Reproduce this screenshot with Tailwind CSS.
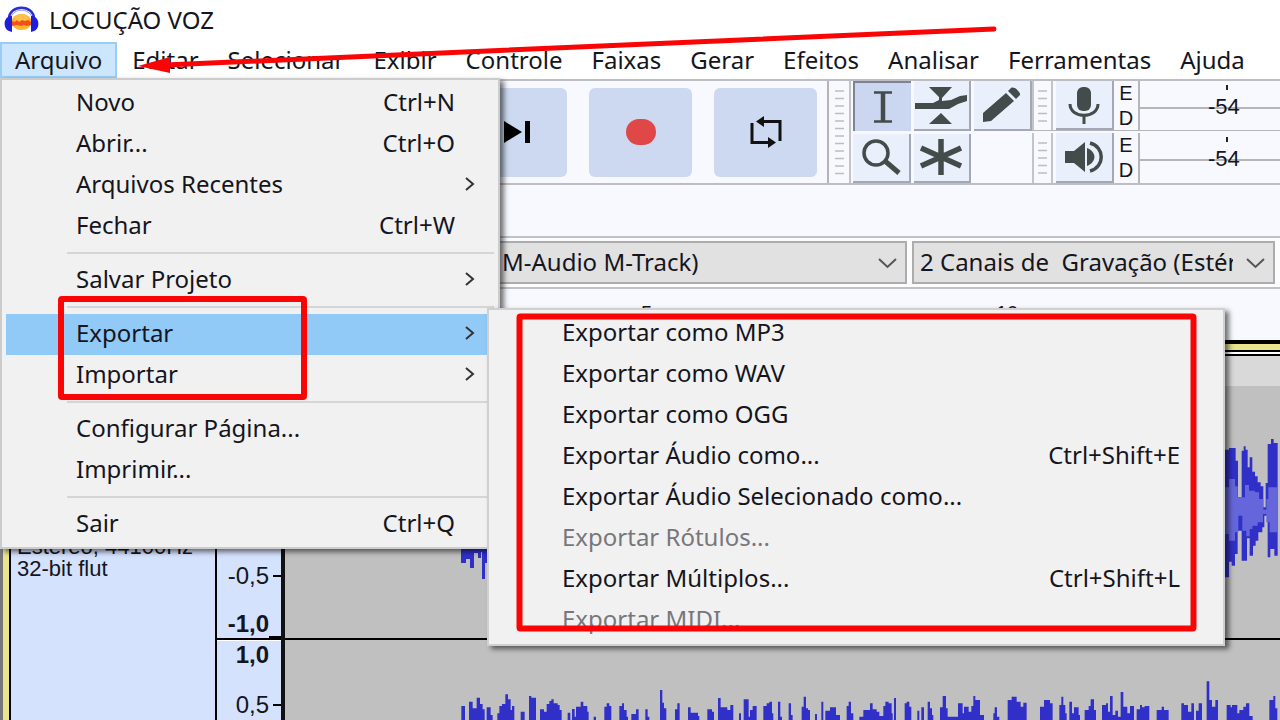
<!DOCTYPE html>
<html lang="pt-BR">
<head>
<meta charset="utf-8">
<title>LOCUÇÃO VOZ</title>
<script src="https://cdn.jsdelivr.net/npm/@tailwindcss/browser@4"></script>
</head>
<body class="relative flex h-screen flex-col overflow-hidden bg-white font-['Noto_Sans','Open_Sans',sans-serif] text-[24px] leading-[30px] text-[#151520]">

<header class="flex h-[42px] shrink-0 items-center gap-[10px] pl-1">
  <svg class="h-8 w-[35px]" viewBox="0 0 35 32" aria-hidden="true">
    <ellipse cx="17.500" cy="17" rx="10" ry="8" fill="#ffb52e"/>
    <ellipse cx="17.500" cy="13" rx="7" ry="4" fill="#ffc04a"/>
    <path d="M8 16l3 1 2-2 2 2 3-2 3 1 3-1 3 2v3l-4 1-3-1-3 1-4-1-5 1z" fill="#f4501c"/>
    <path d="M5 14C5 -1 30 -1 30 14" fill="none" stroke="#2a2fd0" stroke-width="2.500"/>
    <path d="M7 12C10 3 25 3 28 12" fill="none" stroke="#8d93ef" stroke-width="1"/>
    <path d="M6 11C-1 13-1 24 5 26l3 1V11zM29 11c7 2 7 13 1 15l-3 1V11z" fill="#1d1fdd"/>
  </svg>
  <h1 class="pb-[2px]">LOCUÇÃO VOZ</h1>
</header>

<nav class="flex h-9 shrink-0 items-center gap-px" aria-label="Menu principal">
  <button class="h-full border-2 border-[#99cdf5] bg-[#cce6fd] px-[13px]">Arquivo</button>
  <button class="px-[14px]">Editar</button>
  <button class="px-[14px]">Selecionar</button>
  <button class="px-[14px]">Exibir</button>
  <button class="px-[14px]">Controle</button>
  <button class="px-[14px]">Faixas</button>
  <button class="px-[14px]">Gerar</button>
  <button class="px-[14px]">Efeitos</button>
  <button class="px-[14px]">Analisar</button>
  <button class="px-[14px]">Ferramentas</button>
  <button class="px-[14px]">Ajuda</button>
</nav>

<section class="mt-px flex h-[106px] shrink-0 border-y-2 border-[#bcbec3] bg-[#f8f9ff]" aria-label="Ferramentas">
  <div class="flex w-[829px] shrink-0 items-center justify-end gap-[22px] border-r-2 border-[#b4b4b4] pr-[10px]">
    <button class="flex h-[89px] w-[103px] items-center justify-center rounded-md bg-[#ccd9f1]" aria-label="Ir para o fim">
      <svg class="h-7 w-8" viewBox="0 0 32 28"><path d="M4 3v22l18-11zM25 3h5v22h-5z"/></svg>
    </button>
    <button class="flex h-[89px] w-[103px] items-center justify-center rounded-md bg-[#ccd9f1]" aria-label="Gravar">
      <span class="h-[26px] w-[30px] rounded-full bg-[#e04848]"></span>
    </button>
    <button class="flex h-[89px] w-[103px] items-center justify-center rounded-md bg-[#ccd9f1]" aria-label="Repetir">
      <svg class="h-8 w-8" viewBox="0 0 32 32" fill="none" stroke="#111" stroke-width="3"><path d="M2 7v19.500h18M30 25V5.500H12"/><path d="M14 0v11L6 5.500zM18 21v11l8-5.500z" fill="#111" stroke="none"/></svg>
    </button>
  </div>
  <div class="flex w-[22px] shrink-0 items-center justify-center border-r-2 border-[#c4c4c6]">
    <svg class="h-[86px] w-[9px]" viewBox="0 0 9 86" stroke="#bdbdbf" stroke-width="1.500"><path d="M0 2h9M0 9.500h9M0 17h9M0 24.500h9M0 32h9M0 39.500h9M0 47h9M0 54.500h9M0 62h9M0 69.500h9M0 77h9M0 84.500h9"/></svg>
  </div>
  <div class="grid w-[181px] shrink-0 grid-cols-3 grid-rows-2 gap-x-[3px] gap-y-[3px] pl-[2px]">
    <button class="flex items-center justify-center border-t-2 border-l-2 border-[#7f8494] bg-[#cbd7f0]" aria-label="Seleção">
      <svg class="h-8 w-5" viewBox="0 0 20 32" fill="none" stroke="#444b4b"><path d="M10 2v28" stroke-width="4.500"/><path d="M1 1.500h18M1 30.500h18" stroke-width="2.500"/></svg>
    </button>
    <button class="flex items-center justify-center border-r-2 border-b-2 border-[#a4a8b6] bg-[#e9f0fc]" aria-label="Envelope">
      <svg class="h-[38px] w-[54px]" viewBox="0 0 54 38" fill="#444b4b"><path d="M15 1h23L28 12v3l9-1 9-4 7-1v6l-9 3-9 5H1v-6h18l6-3v-3zM27 27l11 11H15z"/></svg>
    </button>
    <button class="flex items-center justify-center border-r-2 border-b-2 border-[#a4a8b6] bg-[#e9f0fc]" aria-label="Desenho">
      <svg class="h-9 w-10" viewBox="0 0 40 36" fill="#444b4b"><path d="M1 35V26L24 6l8 8L9 34zM26 4l3-3c3-2 10 4 9 7l-4 4z"/></svg>
    </button>
    <button class="flex items-center justify-center border-r-2 border-b-2 border-[#a4a8b6] bg-[#e9f0fc]" aria-label="Zoom">
      <svg class="h-9 w-10" viewBox="0 0 40 36" fill="none" stroke="#444b4b"><circle cx="15" cy="14" r="12" stroke-width="3.500"/><path d="M24 22l14 12" stroke-width="5"/></svg>
    </button>
    <button class="flex items-center justify-center border-r-2 border-b-2 border-[#a4a8b6] bg-[#e9f0fc]" aria-label="Multiferramenta">
      <svg class="h-9 w-11" viewBox="0 0 44 36" stroke="#444b4b" stroke-width="5.500"><path d="M22 0v36M2 9l40 18M2 27L42 9"/></svg>
    </button>
  </div>
  <div class="flex min-w-0 flex-1 flex-col gap-[2px]">
    <div class="flex h-[50px] border-b border-[#b6b6b8]">
      <div class="flex w-[21px] items-center justify-center border-x-2 border-[#c4c4c6]">
        <svg class="h-8 w-[9px]" viewBox="0 0 9 32" stroke="#bdbdbf" stroke-width="1.500"><path d="M0 1h9M0 8.500h9M0 16h9M0 23.500h9M0 31h9"/></svg>
      </div>
      <button class="ml-[3px] flex w-[58px] items-center justify-center border-r-2 border-b-2 border-[#a4a8b6] bg-[#e9f0fc]" aria-label="Nível de gravação">
        <svg class="h-[38px] w-8" viewBox="0 0 32 38"><rect x="9" y="1" width="14" height="24" rx="6" fill="#444b4b"/><path d="M2 18c0 15 28 15 28 0M16 29v9" fill="none" stroke="#444b4b" stroke-width="3"/></svg>
      </button>
      <div class="flex w-6 flex-col items-center font-['Liberation_Sans',sans-serif] text-[20px] leading-[25px]"><span>E</span><span>D</span></div>
      <div class="relative flex-1 border-l-2 border-[#b6b6b8]">
        <div class="h-[28px] border-b-2 border-[#b6b6b8]"></div>
        <div class="absolute top-[4px] left-[86px] h-[5px] w-[2px] bg-[#222]"></div>
        <span class="absolute top-[13px] left-[68px] font-['Liberation_Sans',sans-serif] text-[22px] leading-[25px]">-54</span>
      </div>
    </div>
    <div class="flex h-[50px]">
      <div class="flex w-[21px] items-center justify-center border-x-2 border-[#c4c4c6]">
        <svg class="h-8 w-[9px]" viewBox="0 0 9 32" stroke="#bdbdbf" stroke-width="1.500"><path d="M0 1h9M0 8.500h9M0 16h9M0 23.500h9M0 31h9"/></svg>
      </div>
      <button class="ml-[3px] flex w-[58px] items-center justify-center border-r-2 border-b-2 border-[#a4a8b6] bg-[#e9f0fc]" aria-label="Nível de reprodução">
        <svg class="h-8 w-10" viewBox="0 0 40 32" fill="#444b4b"><path d="M1 10h9L21 1v30L10 22H1zM23 7c10 4 10 14 0 18z"/><path d="M26 2c15 4 15 24 0 28" fill="none" stroke="#444b4b" stroke-width="3.500"/></svg>
      </button>
      <div class="flex w-6 flex-col items-center font-['Liberation_Sans',sans-serif] text-[20px] leading-[25px]"><span>E</span><span>D</span></div>
      <div class="relative flex-1 border-l-2 border-[#b6b6b8]">
        <div class="h-[28px] border-b-2 border-[#b6b6b8]"></div>
        <div class="absolute top-[4px] left-[86px] h-[5px] w-[2px] bg-[#222]"></div>
        <span class="absolute top-[13px] left-[68px] font-['Liberation_Sans',sans-serif] text-[22px] leading-[25px]">-54</span>
      </div>
    </div>
  </div>
</section>

<div class="h-[51px] shrink-0 bg-[#f8f9ff]"></div>

<section class="flex h-[53px] shrink-0 items-center gap-[5px] border-y-2 border-[#c0c1c5] bg-[#fcfcff] pr-[5px]" aria-label="Dispositivos">
  <div class="relative w-[907px] shrink-0">
    <select aria-label="Dispositivo de gravação" class="block h-[43px] w-full appearance-none border-2 border-[#acacac] bg-[#e1e1e1] pr-10 pb-[2px] pl-[500px]"><option>M-Audio M-Track)</option></select>
    <svg class="pointer-events-none absolute top-[17px] right-[10px] h-[11px] w-[19px]" viewBox="0 0 19 11" fill="none" stroke="#555" stroke-width="2"><path d="M1 1l8.500 8L18 1"/></svg>
  </div>
  <div class="relative min-w-0 flex-1">
    <select aria-label="Canais de gravação" class="block h-[43px] w-full appearance-none border-2 border-[#acacac] bg-[#e1e1e1] pr-10 pb-[2px] pl-[6px]"><option>2 Canais de&nbsp; Gravação (Estéreo)</option></select>
    <svg class="pointer-events-none absolute top-[17px] right-[10px] h-[11px] w-[19px]" viewBox="0 0 19 11" fill="none" stroke="#555" stroke-width="2"><path d="M1 1l8.500 8L18 1"/></svg>
  </div>
</section>

<div class="flex h-[51px] shrink-0 bg-[#f8f9ff] pt-3 pl-[641px] font-['Liberation_Sans',sans-serif] text-[20px] leading-[24px]">
  <span class="w-[355px]">5</span><span>10</span>
</div>

<main class="flex min-h-0 flex-1 flex-col bg-[#c0c0c0]">
  <div class="h-1 shrink-0 bg-black"></div>
  <div class="flex min-h-0 flex-1 border-l-[3px] border-[#77777d]">
    <div class="w-[6px] shrink-0 bg-[#e9e58a]"></div>
    <div class="flex min-w-0 flex-1 flex-col">
      <div class="h-[8px] shrink-0 border-b-2 border-black bg-[#e9e58a]"></div>
      <div class="h-[2px] shrink-0 bg-white"></div>
      <div class="flex min-h-0 flex-1 border-t-2 border-l-2 border-black font-['Liberation_Sans',sans-serif]">
        <div class="flex w-[206px] shrink-0 flex-col border-r-2 border-black bg-[#d4e2fe] pt-[180px] pl-[6px] text-[22px] leading-[22px]">
          <span class="whitespace-nowrap">Estéreo, 44100Hz</span>
          <span>32-bit flut</span>
        </div>
        <div class="flex w-[68px] shrink-0 flex-col border-r-4 border-[#111] bg-[#d4e2fe] text-[24px] leading-[28px]">
          <div class="flex h-[284px] shrink-0 flex-col justify-end border-b-2 border-black">
            <div class="flex items-center justify-end gap-1 pb-[20px]"><span>-0,5</span><span class="h-[2px] w-2 bg-black"></span></div>
            <div class="flex items-end justify-end font-bold"><span>-1,0</span><span class="h-[2px] w-3 bg-black"></span></div>
          </div>
          <div class="flex flex-col items-end border-t border-white">
            <span class="pr-3 font-bold">1,0</span>
            <div class="flex items-center gap-1 pt-[22px]"><span>0,5</span><span class="h-[2px] w-2 bg-black"></span></div>
          </div>
        </div>
        <div class="flex min-w-0 flex-1 flex-col">
          <div class="h-[30px] shrink-0 bg-[#d9d9d9]"></div>
          <svg class="h-[252px] w-full shrink-0" aria-label="Canal esquerdo">
            <g transform="translate(940 13) scale(.33333)">
              <path fill="#3030c8" d="M0 152H12V147H32V185H39V295H50V155H56V142H62V152H68V205H74V175H82V218H90V232H98V250H107V262H115V325H122V252H128V135H138V120H146V132H158V470H148V450H136V475H128V350H118V385H112V400H100V425H92V440H84V470H74V418H66V485H50V395H38V465H30V500H20V488H12V535H0z"/>
              <path fill="#6666dc" d="M0 265H12V240H30V262H38V295H60V258H72V275H90V280H102V300H115V332H124V300H130V265H158V400H134V370H124V345H114V370H98V380H82V390H74V412H64V395H52V350H40V400H30V425H12V405H0z"/>
            </g>
            <path fill="#3030c8" d="M176 150V177H181V173H185V182H189V167H193V172H196V166H197V193H200V177H203V150z"/>
          </svg>
          <div class="h-[2px] shrink-0 bg-black"></div>
          <svg class="min-h-0 w-full flex-1" aria-label="Canal direito">
            <g transform="translate(-285 80) scale(.33333 -.33333)"><path id="wave" fill="#3030c8"/></g>
          </svg>
        </div>
      </div>
    </div>
  </div>
</main>

<div class="absolute top-[78px] left-0 w-[500px] border-2 border-[#cccccc] bg-[#f1f1f1] pt-[3px] pb-[2px] shadow-[4px_3px_5px_rgba(0,0,0,.55)]" role="menu">
  <button class="flex h-[41px] w-full items-center justify-between pr-[43px] pb-[3px] pl-[74px]"><span>Novo</span><span>Ctrl+N</span></button>
  <button class="flex h-[41px] w-full items-center justify-between pr-[43px] pb-[3px] pl-[74px]"><span>Abrir...</span><span>Ctrl+O</span></button>
  <button class="flex h-[41px] w-full items-center justify-between pr-[23px] pb-[3px] pl-[74px]"><span>Arquivos Recentes</span><svg class="h-[14px] w-[10px]" viewBox="0 0 10 14" fill="none" stroke="#333" stroke-width="2"><path d="M1 1l7 6-7 6"/></svg></button>
  <button class="flex h-[41px] w-full items-center justify-between pr-[43px] pb-[3px] pl-[74px]"><span>Fechar</span><span>Ctrl+W</span></button>
  <hr class="my-[5px] mr-1 ml-[65px] border-t-2 border-[#d5d5d5] pb-px">
  <button class="flex h-[41px] w-full items-center justify-between pr-[23px] pb-[3px] pl-[74px]"><span>Salvar Projeto</span><svg class="h-[14px] w-[10px]" viewBox="0 0 10 14" fill="none" stroke="#333" stroke-width="2"><path d="M1 1l7 6-7 6"/></svg></button>
  <hr class="my-[5px] mr-1 ml-[65px] border-t-2 border-[#d5d5d5] pb-px">
  <button class="ml-1 flex h-[41px] w-[488px] items-center justify-between bg-[#91c9f7] pr-[19px] pb-[3px] pl-[70px]"><span>Exportar</span><svg class="h-[14px] w-[10px]" viewBox="0 0 10 14" fill="none" stroke="#333" stroke-width="2"><path d="M1 1l7 6-7 6"/></svg></button>
  <button class="flex h-[41px] w-full items-center justify-between pr-[23px] pb-[3px] pl-[74px]"><span>Importar</span><svg class="h-[14px] w-[10px]" viewBox="0 0 10 14" fill="none" stroke="#333" stroke-width="2"><path d="M1 1l7 6-7 6"/></svg></button>
  <hr class="my-[5px] mr-1 ml-[65px] border-t-2 border-[#d5d5d5] pb-px">
  <button class="flex h-[41px] w-full items-center pb-[3px] pl-[74px]">Configurar Página...</button>
  <button class="flex h-[41px] w-full items-center pb-[3px] pl-[74px]">Imprimir...</button>
  <hr class="my-[5px] mr-1 ml-[65px] border-t-2 border-[#d5d5d5] pb-px">
  <button class="flex h-[41px] w-full items-center justify-between pr-[43px] pb-[3px] pl-[74px]"><span>Sair</span><span>Ctrl+Q</span></button>
</div>

<div class="absolute top-[308px] left-[487px] w-[738px] border-2 border-[#d0d0d0] bg-[#f1f1f1] pt-[3px] pb-[3px] shadow-[4px_3px_5px_rgba(0,0,0,.55)]" role="menu">
  <button class="flex h-[41px] w-full items-center pb-[3px] pl-[73px]">Exportar como MP3</button>
  <button class="flex h-[41px] w-full items-center pb-[3px] pl-[73px]">Exportar como WAV</button>
  <button class="flex h-[41px] w-full items-center pb-[3px] pl-[73px]">Exportar como OGG</button>
  <button class="flex h-[41px] w-full items-center justify-between pr-[43px] pb-[3px] pl-[73px]"><span>Exportar Áudio como...</span><span>Ctrl+Shift+E</span></button>
  <button class="flex h-[41px] w-full items-center pb-[3px] pl-[73px]">Exportar Áudio Selecionado como...</button>
  <button disabled class="flex h-[41px] w-full items-center pb-[3px] pl-[73px] text-[#77777b]">Exportar Rótulos...</button>
  <button class="flex h-[41px] w-full items-center justify-between pr-[43px] pb-[3px] pl-[73px]"><span>Exportar Múltiplos...</span><span>Ctrl+Shift+L</span></button>
  <button disabled class="flex h-[41px] w-full items-center pb-[3px] pl-[73px] text-[#77777b]">Exportar MIDI...</button>
</div>

<svg class="pointer-events-none absolute top-0 left-0 h-[720px] w-[1280px]" viewBox="0 0 1280 720" fill="none" stroke="#fa0505" stroke-width="6" aria-hidden="true">
  <path d="M165 65L994 29" stroke-width="5" stroke-linecap="round"/>
  <path d="M138 66L170 57V73z" fill="#fa0505" stroke="none"/>
  <rect x="61" y="299" width="243" height="98" rx="1"/>
  <rect x="519.500" y="316.500" width="674" height="312" rx="1"/>
</svg>

<script>
  // Waveform envelope: x position and level of each step, in thirds of a pixel.
  const low = [
    4,42,15,0,27,55,38,35,50,67,60,48,68,32,74,0,80,38,92,15,98,0,112,20,118,42,126,48,136,77,144,62,152,30,156,42,163,0,182,25,194,0,
    207,72,214,67,228,0,240,32,252,25,260,48,268,57,274,62,281,50,293,45,299,30,305,0,323,22,331,0,336,33,344,10,348,40,362,55,370,42,382,25,386,0,401,10,408,0,
    433,40,440,50,448,42,454,0,478,42,486,50,492,30,500,10,504,0,514,18,528,32,536,0,556,32,563,10,568,0,600,90,607,52,612,35,619,0,
    645,32,652,50,659,0,684,38,692,22,714,12,718,0,742,32,756,25,762,0,774,66,782,38,802,30,811,45,820,0,837,20,843,0,
    851,62,866,10,870,30,878,42,890,0,910,42,920,50,928,55,936,20,940,0,954,55,961,10,966,0,986,50,993,15,998,0,
    1025,40,1031,70,1038,35,1044,30,1050,0,1065,18,1071,0,1084,55,1090,0,1096,28,1110,38,1128,15,1140,0,
    1160,42,1166,55,1173,20,1180,0,1198,10,1210,30,1230,50,1238,32,1250,25,1258,12,
    1270,42,1276,55,1286,50,1295,20,1298,0,1302,66,1308,0,1334,50,1340,55,1348,40,1354,0,1372,28,1378,0,1384,38,1392,0,1403,55,1410,35,1416,15,1420,0,
    1440,38,1448,72,1458,35,1463,10,1494,50,1508,20,1512,40,1526,25,1534,42,1540,72,1546,60,1560,15,1572,0,1600,20,1604,38,1611,10,1618,0,
    1643,60,1655,70,1670,55,1682,40,1690,52,1700,0,1740,40,1752,60,1770,50,1778,0,1798,45,1804,70,1810,45,1816,20,1820,0,1828,55,1836,20,1842,38,1856,15,1860,0,
    1874,30,1886,42,1892,62,1902,30,1908,0,1926,45,1938,50,1944,25,1950,72,1958,15,1966,28,1974,10,1982,84,1990,40,2002,20,2010,42,2022,0,
    2030,32,2040,45,2046,38,2054,42,2068,0,2090,30,2105,40,2112,30,2126,0,2164,50,2172,45,2184,25,2194,50,2202,0,2208,28,2216,50,2226,0,
    2240,116,2248,60,2256,40,2266,60,2274,0,2300,45,2312,38,2316,45,2332,20,2338,30,2350,40,2358,50,2368,12,2378,0,2428,60,2440,72,2446,35,2452,0];
  let d = 'M1380 -60V0';
  for (let i = 0; i < low.length; i += 2) d += 'H' + (1380 + low[i]) + 'V' + low[i + 1];
  document.getElementById('wave').setAttribute('d', d + 'H3832V-60z');
</script>
</body>
</html>
